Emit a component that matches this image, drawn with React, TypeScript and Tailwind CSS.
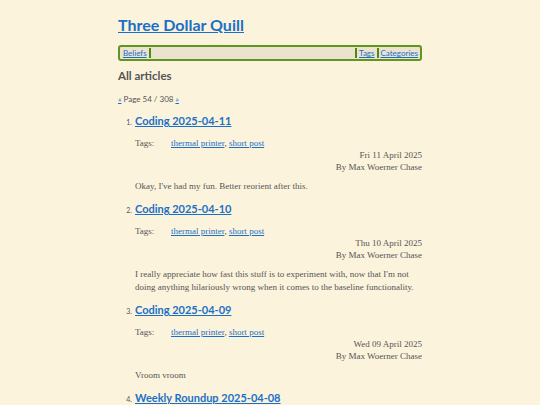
import React from "react";

const posts = [
  {
    title: "Coding 2025-04-11",
    date: "Fri 11 April 2025",
    body: "Okay, I've had my fun. Better reorient after this.",
  },
  {
    title: "Coding 2025-04-10",
    date: "Thu 10 April 2025",
    body: "I really appreciate how fast this stuff is to experiment with, now that I'm not doing anything hilariously wrong when it comes to the baseline functionality.",
  },
  {
    title: "Coding 2025-04-09",
    date: "Wed 09 April 2025",
    body: "Vroom vroom",
  },
  {
    title: "Weekly Roundup 2025-04-08",
    date: "Tue 08 April 2025",
    body: "",
  },
];

const sans = "font-['Lato','Open_Sans',sans-serif]";
const serif = "font-['Liberation_Serif','DejaVu_Serif',serif]";

export default function App() {
  return (
    <div className="h-[405px] bg-[#fcf3dc] overflow-hidden">
      <div className="w-[304px] mx-auto pt-[14px]">
        <h1 className={`${sans} text-[16px] font-bold leading-[22px] text-[#1a70c6] underline`}>
          <a href="#">Three Dollar Quill</a>
        </h1>

        <nav className={`${sans} mt-[9px] h-[16px] flex items-center border-2 border-[#5f9620] rounded-[3px] bg-[#ebe3cf] px-[2px] text-[8px] text-[#1a70c6]`}>
          <a href="#" className="underline px-[1px]">Beliefs</a>
          <span className="w-[2px] h-[10px] bg-[#4d8a12] ml-[1px]" />
          <span className="flex-1" />
          <span className="w-[2px] h-[10px] bg-[#4d8a12] mr-[2px]" />
          <a href="#" className="underline">Tags</a>
          <span className="w-[2px] h-[10px] bg-[#4d8a12] mx-[2px]" />
          <a href="#" className="underline">Categories</a>
        </nav>

        <h2 className={`${sans} mt-[7px] text-[11.5px] font-bold leading-[16px] text-[#555]`}>All articles</h2>

        <p className={`${sans} mt-[10px] text-[8px] leading-[10px] text-[#555]`}>
          <a href="#" className="text-[#1a70c6] underline">«</a> Page 54 / 308{" "}
          <a href="#" className="text-[#1a70c6] underline">»</a>
        </p>

        <ol className="mt-[9px] pl-[17px]">
          {posts.map((p, i) => (
            <li key={p.title} className="mb-[8px]">
              <div className="flex items-baseline">
                <span className={`${sans} w-[7px] -ml-[10px] mr-[3px] text-right text-[7px] text-[#555]`}>{i + 1}.</span>
                <a href="#" className={`${sans} text-[11px] font-bold leading-[16px] text-[#1a70c6] underline`}>
                  {p.title}
                </a>
              </div>
              <div className={`${serif} text-[9px] leading-[12px] text-[#555]`}>
                <div className="mt-[8px] flex">
                  <span className="w-[36px]">Tags:</span>
                  <span>
                    <a href="#" className="text-[#1a70c6] underline">thermal printer</a>,{" "}
                    <a href="#" className="text-[#1a70c6] underline">short post</a>
                  </span>
                </div>
                <div className="text-right">
                  <div>{p.date}</div>
                  <div>By Max Woerner Chase</div>
                </div>
                {p.body && <p className="mt-[7px] pr-[6px] leading-[13px]">{p.body}</p>}
              </div>
            </li>
          ))}
        </ol>
      </div>
    </div>
  );
}
